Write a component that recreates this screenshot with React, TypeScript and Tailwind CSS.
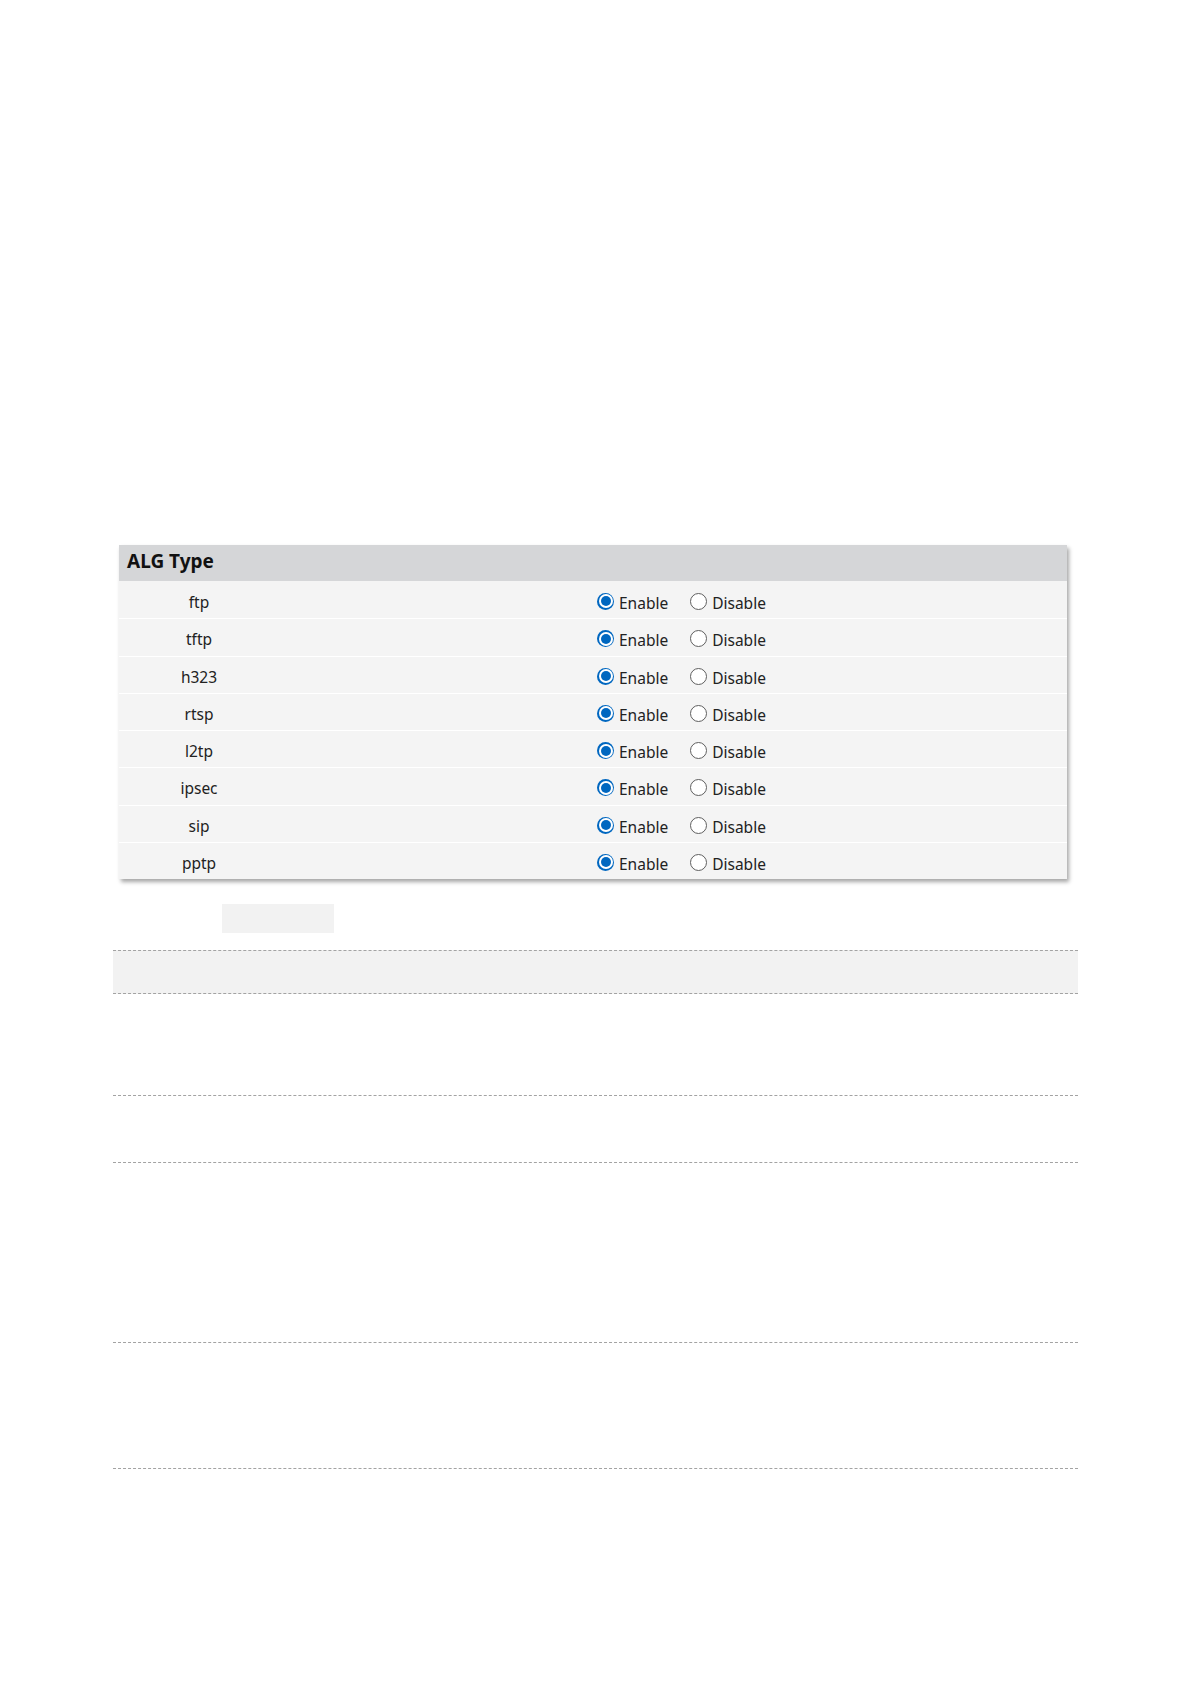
import React from 'react'

const algTypes = ['ftp', 'tftp', 'h323', 'rtsp', 'l2tp', 'ipsec', 'sip', 'pptp']

function Radio({ checked }: { checked: boolean }) {
  if (checked) {
    return (
      <span className="w-[17px] h-[17px] rounded-full bg-[#0067c0] flex items-center justify-center shrink-0">
        <span className="w-[14px] h-[14px] rounded-full bg-white flex items-center justify-center">
          <span className="w-[10px] h-[10px] rounded-full bg-[#0067c0]" />
        </span>
      </span>
    )
  }
  return <span className="w-[17px] h-[17px] rounded-full border border-[#5f5f5f] bg-white shrink-0" />
}

function AlgRow({ name, first }: { name: string; first: boolean }) {
  return (
    <div className={`flex items-center h-[37.25px] bg-[#f4f4f4] ${first ? '' : 'border-t border-white'}`}>
      <div className="w-[160px] text-center text-[15.5px] text-[#222] pt-[5px]">{name}</div>
      <div className="flex items-center pl-[318px] pt-[3px] text-[15.5px] text-[#222]">
        <label className="flex items-center gap-[5px]">
          <Radio checked />
          <span className="pt-[4px]">Enable</span>
        </label>
        <label className="flex items-center gap-[5px] ml-[22px]">
          <Radio checked={false} />
          <span className="pt-[4px]">Disable</span>
        </label>
      </div>
    </div>
  )
}

export default function App() {
  return (
    <div className="w-[1191px] min-h-[1684px] bg-white pt-[545px]" style={{ fontFamily: '"Noto Sans", "Open Sans", sans-serif' }}>
      <div className="ml-[119px] w-[948px] shadow-[2px_3px_4px_rgba(0,0,0,0.35)]">
        <div className="h-[36px] bg-[#d5d6d8] flex items-center pl-[8px] pb-[3px] text-[19px] font-bold text-[#111]">
          ALG Type
        </div>
        {algTypes.map((t, i) => (
          <AlgRow key={t} name={t} first={i === 0} />
        ))}
      </div>

      <div className="ml-[222px] mt-[25px] w-[112px] h-[29px] bg-[#f2f2f2]" />

      <div className="ml-[113px] w-[965px] mt-[17px]">
        <div className="h-[44px] bg-[#f2f2f2] border-y border-dashed border-[#a3a3a3]" />
        <div className="h-[102px] border-b border-dashed border-[#a3a3a3]" />
        <div className="h-[67px] border-b border-dashed border-[#a3a3a3]" />
        <div className="h-[180px] border-b border-dashed border-[#a3a3a3]" />
        <div className="h-[126px] border-b border-dashed border-[#a3a3a3]" />
      </div>
    </div>
  )
}
